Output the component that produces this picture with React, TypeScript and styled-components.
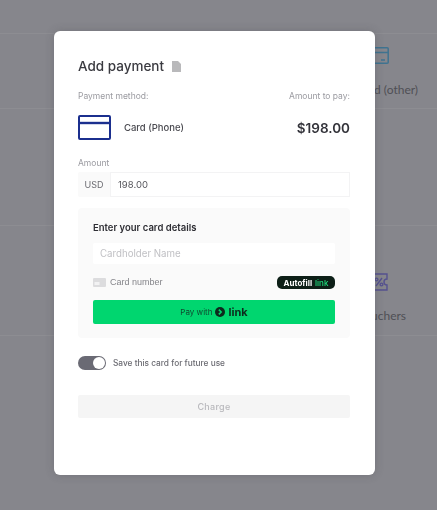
import React from 'react';
import styled, { createGlobalStyle } from 'styled-components';

const GlobalStyle = createGlobalStyle`
  html, body {
    margin: 0;
    padding: 0;
    height: 100%;
    overflow: hidden;
    background: #86868c;
    font-family: Inter, "Noto Sans", "Liberation Sans", sans-serif;
  }
  * {
    box-sizing: border-box;
  }
`;

const Page = styled.div`
  width: 437px;
  height: 510px;
  padding-top: 33px;
  background: #86868c;
  overflow: hidden;
`;

const TileRow = styled.div<{ $height: number }>`
  display: grid;
  grid-template-columns: 1fr 1fr 104px;
  height: ${(p) => p.$height}px;
  border-top: 1px solid #8d8d92;
`;

const Tile = styled.div<{ $top: number; $gap: number; $shift: number }>`
  grid-column: 3;
  display: flex;
  flex-direction: column;
  align-items: center;
  gap: ${(p) => p.$gap}px;
  padding-top: ${(p) => p.$top}px;
  padding-left: ${(p) => Math.max(p.$shift, 0)}px;
  padding-right: ${(p) => Math.max(-p.$shift, 0)}px;
  color: #4f4f55;
  font-family: Lato, "Noto Sans", sans-serif;
  font-size: 12px;
  line-height: 14px;
  white-space: nowrap;
`;

const TileIcon = styled.svg<{ $offset: number }>`
  display: block;
  margin-right: ${(p) => p.$offset}px;
`;

const Backdrop = styled.div`
  position: fixed;
  inset: 0;
`;

const Modal = styled.div`
  position: absolute;
  left: 54px;
  top: 31px;
  width: 321px;
  height: 444px;
  padding: 25px 25px 0 24px;
  background: #fff;
  border-radius: 6px;
  box-shadow: 0 0 8px rgba(60, 60, 66, 0.25);
  color: #33333a;
`;

const Heading = styled.div`
  display: flex;
  align-items: center;
  gap: 8px;
  height: 20px;
  font-size: 13.5px;
  font-weight: 500;
  color: #3a3a40;
`;

const Split = styled.div`
  display: flex;
  justify-content: space-between;
  align-items: center;
`;

const LabelRow = styled(Split)`
  margin-top: 14px;
  height: 12px;
`;

const Label = styled.span`
  font-size: 8.5px;
  color: #9a9aa0;
`;

const MethodRow = styled(Split)`
  margin-top: 13px;
  height: 25px;
`;

const Method = styled.div`
  display: flex;
  align-items: center;
  gap: 13px;
  font-size: 9.5px;
  font-weight: 500;
  color: #4a4a50;
`;

const Price = styled.span`
  font-size: 13.5px;
  font-weight: 600;
  color: #33333a;
`;

const AmountLabel = styled(Label)`
  display: block;
  margin-top: 17px;
  height: 12px;
  line-height: 12px;
`;

const AmountField = styled.div`
  display: flex;
  margin-top: 3px;
  height: 25px;
  background: #fafafa;
  border-radius: 2px;
`;

const Currency = styled.span`
  display: flex;
  align-items: center;
  justify-content: center;
  width: 32px;
  font-size: 9px;
  color: #6c6c72;
`;

const AmountValue = styled.span`
  display: flex;
  align-items: center;
  flex: 1;
  padding-left: 7px;
  background: #fff;
  border: 1px solid #f3f3f4;
  font-size: 9.5px;
  color: #55555b;
`;

const Panel = styled.div`
  margin-top: 11px;
  height: 130px;
  padding: 13px 15px 0;
  background: #fafafa;
  border-radius: 4px;
`;

const PanelTitle = styled.div`
  height: 14px;
  line-height: 14px;
  font-size: 9.5px;
  font-weight: 600;
  color: #2e2e34;
`;

const NameInput = styled.div`
  display: flex;
  align-items: center;
  margin-top: 8px;
  height: 21px;
  padding-left: 7px;
  background: #fff;
  border-radius: 2px;
  font-size: 9.7px;
  color: #c0c0c4;
`;

const CardRow = styled(Split)`
  margin-top: 12px;
  height: 13px;
`;

const CardNumber = styled.div`
  display: flex;
  align-items: center;
  gap: 4px;
  font-family: "Liberation Sans", Arial, sans-serif;
  font-size: 9px;
  line-height: 11px;
  color: #85858a;
`;

const AutofillBadge = styled.div`
  display: flex;
  align-items: center;
  justify-content: center;
  gap: 3px;
  width: 58px;
  height: 13px;
  background: #0d1f17;
  border-radius: 5px;
  font-size: 8px;
  font-weight: 700;
  color: #fff;
`;

const BadgeLink = styled.span`
  color: #1fe07f;
  font-weight: 500;
`;

const PayButton = styled.div`
  display: flex;
  align-items: center;
  justify-content: center;
  gap: 3px;
  margin-top: 11px;
  height: 24px;
  background: #00d66f;
  border-radius: 2px;
  font-size: 8px;
  color: #0f4a30;
`;

const LinkWord = styled.span`
  font-size: 11px;
  font-weight: 700;
  color: #0d2a1d;
`;

const SaveRow = styled.div`
  display: flex;
  align-items: center;
  gap: 7px;
  margin-top: 18px;
  height: 14px;
  font-size: 8.3px;
  font-weight: 500;
  color: #6b6b72;
`;

const Toggle = styled.span`
  display: flex;
  justify-content: flex-end;
  align-items: center;
  width: 28px;
  height: 14px;
  padding-right: 1px;
  background: #6a6a74;
  border-radius: 7px;
`;

const ToggleKnob = styled.span`
  width: 12px;
  height: 12px;
  background: #fff;
  border-radius: 50%;
`;

const ChargeButton = styled.div`
  display: flex;
  align-items: center;
  justify-content: center;
  margin-top: 25px;
  height: 23px;
  background: #f5f5f5;
  border-radius: 2px;
  font-size: 9px;
  font-weight: 500;
  letter-spacing: 0.3px;
  color: #b9b9bd;
`;

const App: React.FC = () => {
  return (
    <>
      <GlobalStyle />
      <Page>
        <TileRow $height={75}>
          <Tile $top={13} $gap={19} $shift={4}>
            <TileIcon $offset={20} width="24" height="17" viewBox="0 0 24 17" fill="none" stroke="#3f7390" strokeWidth="1.5">
              <rect x="0.8" y="0.8" width="22.4" height="15.4" rx="1" />
              <path d="M1 5.5h22M16 13h4" />
            </TileIcon>
            <span>Card (other)</span>
          </Tile>
        </TileRow>
        <TileRow $height={117} />
        <TileRow $height={110}>
          <Tile $top={47} $gap={18} $shift={-7}>
            <TileIcon $offset={5} width="18" height="18" viewBox="0 0 18 18" fill="none" stroke="#56528f" strokeWidth="1.4">
              <path d="M1 1h16v5a3 3 0 0 0 0 6v5H1v-5a3 3 0 0 0 0-6z" />
              <path d="M6 13l6-8" />
              <circle cx="6.5" cy="6.5" r="1.4" />
              <circle cx="11.5" cy="11.5" r="1.4" />
            </TileIcon>
            <span>Vouchers</span>
          </Tile>
        </TileRow>
        <TileRow $height={100} />
      </Page>
      <Backdrop>
        <Modal>
          <Heading>
            Add payment
            <svg width="9" height="11" viewBox="0 0 9 11" fill="#b9b9bb">
              <path d="M0 0h6l3 3v8H0z" />
            </svg>
          </Heading>
          <LabelRow>
            <Label>Payment method:</Label>
            <Label>Amount to pay:</Label>
          </LabelRow>
          <MethodRow>
            <Method>
              <svg width="33" height="25" viewBox="0 0 33 25" fill="none" stroke="#1b2f8e" strokeWidth="2">
                <rect x="1" y="1" width="31" height="23" rx="1" />
                <path d="M1 8h31" strokeWidth="2.4" />
              </svg>
              Card (Phone)
            </Method>
            <Price>$198.00</Price>
          </MethodRow>
          <AmountLabel>Amount</AmountLabel>
          <AmountField>
            <Currency>USD</Currency>
            <AmountValue>198.00</AmountValue>
          </AmountField>
          <Panel>
            <PanelTitle>Enter your card details</PanelTitle>
            <NameInput>Cardholder Name</NameInput>
            <CardRow>
              <CardNumber>
                <svg width="13" height="9" viewBox="0 0 13 9">
                  <rect width="13" height="9" rx="1" fill="#dcdcde" />
                  <rect x="1.5" y="4" width="5" height="3" fill="#f2f2f3" />
                </svg>
                Card number
              </CardNumber>
              <AutofillBadge>
                Autofill <BadgeLink>link</BadgeLink>
              </AutofillBadge>
            </CardRow>
            <PayButton>
              Pay with
              <svg width="10" height="10" viewBox="0 0 10 10">
                <circle cx="5" cy="5" r="5" fill="#0d2a1d" />
                <path d="M3.8 2.6L6.2 5 3.8 7.4" fill="none" stroke="#00d66f" strokeWidth="1.5" />
              </svg>
              <LinkWord>link</LinkWord>
            </PayButton>
          </Panel>
          <SaveRow>
            <Toggle>
              <ToggleKnob />
            </Toggle>
            Save this card for future use
          </SaveRow>
          <ChargeButton>Charge</ChargeButton>
        </Modal>
      </Backdrop>
    </>
  );
};

export default App;
